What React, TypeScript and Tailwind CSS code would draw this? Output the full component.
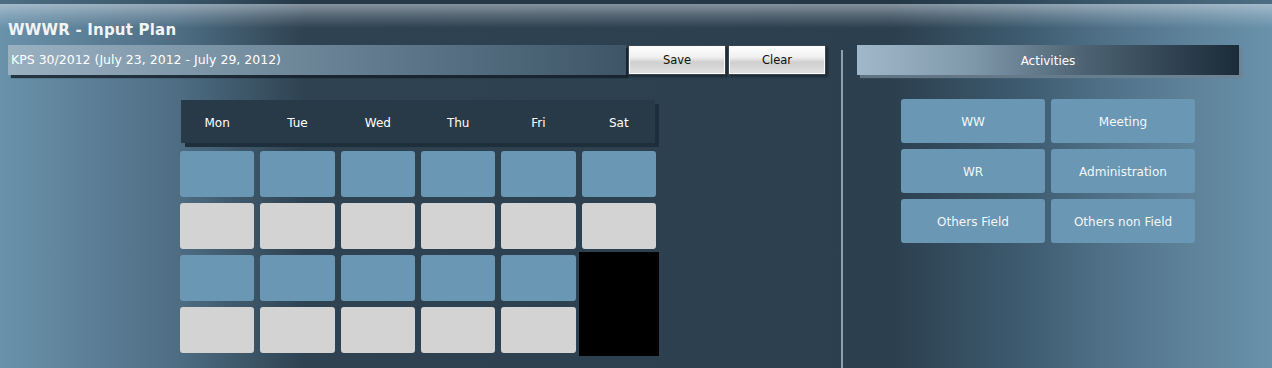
import React from "react";

const days = ["Mon", "Tue", "Wed", "Thu", "Fri", "Sat"];
const activities = ["WW", "Meeting", "WR", "Administration", "Others Field", "Others non Field"];

function Cell({ kind }: { kind: "blue" | "grey" }) {
  return (
    <div
      className={
        kind === "blue"
          ? "h-[46px] rounded-[3px] bg-[#6a97b3]"
          : "h-[46px] rounded-[3px] bg-[#d3d3d3]"
      }
    />
  );
}

function GlossButton({ label }: { label: string }) {
  return (
    <button className="w-[98px] h-[30px] border border-[#3c4650] shadow-[2px_2px_2px_rgba(0,0,0,0.35)] bg-[linear-gradient(to_bottom,#ffffff_0%,#f0f0f0_40%,#cfcfcf_58%,#e2e2e2_100%)] text-[11.5px] text-[#111] flex items-center justify-center">
      <span className="block w-full h-full border border-[#fafafa] flex items-center justify-center pt-[1px]">{label}</span>
    </button>
  );
}

export default function App() {
  return (
    <div className="w-[1272px] h-[368px] overflow-hidden font-['DejaVu_Sans',Verdana,sans-serif] bg-[linear-gradient(to_bottom,rgba(20,40,55,0.35)_0px,rgba(20,40,55,0.35)_4px,rgba(220,228,235,0.5)_4px,rgba(220,228,235,0.22)_16px,rgba(255,255,255,0)_28px),linear-gradient(to_right,#6a92ab_0%,#4e6d83_14%,#2e4251_24%,#2b3f4e_70%,#3d5a6e_80%,#52748b_88%,#6a92ab_100%)]">
      <div className="pt-[21px] pl-[8px] h-[45px]">
        <h1 className="text-[15px] font-bold text-[#f2f4f5] leading-[18px] tracking-[0.2px]">WWWR - Input Plan</h1>
      </div>
      <div className="flex h-[323px]">
        {/* left panel */}
        <div className="ml-[8px] w-[818px] flex flex-col">
          <div className="flex">
            <div className="w-[618px] h-[30px] mr-[2px] flex items-center pl-[3px] text-[12.5px] text-white bg-[linear-gradient(to_right,#9ab1c2_0%,#7d96a8_30%,#5c7588_65%,#3d5567_100%)] shadow-[3px_3px_1px_rgba(20,30,40,0.8)]">
              KPS 30/2012 (July 23, 2012 - July 29, 2012)
            </div>
            <div className="flex gap-[2px]">
              <GlossButton label="Save" />
              <GlossButton label="Clear" />
            </div>
          </div>
          <div className="ml-[172px] mt-[25px] w-[480px]">
            <div className="ml-[1px] w-[474px] h-[43px] bg-[#283a48] shadow-[4px_4px_0px_#1f2e3b] flex items-center pt-[2px]">
              <div className="-ml-[1px] w-[476px] shrink-0 grid grid-cols-6 gap-[6px] text-[12px] text-white">
                {days.map((d) => (
                  <div key={d} className="text-center">
                    {d}
                  </div>
                ))}
              </div>
            </div>
            <div className="mt-[8px] w-[476px] grid grid-cols-6 gap-[6px]">
              {days.map((d) => (
                <Cell key={"a" + d} kind="blue" />
              ))}
              {days.map((d) => (
                <Cell key={"b" + d} kind="grey" />
              ))}
              {days.slice(0, 5).map((d) => (
                <Cell key={"c" + d} kind="blue" />
              ))}
              <div className="row-span-2 -m-[3px] bg-black" />
              {days.slice(0, 5).map((d) => (
                <Cell key={"d" + d} kind="grey" />
              ))}
            </div>
          </div>
        </div>
        {/* divider */}
        <div className="ml-[15px] mt-[5px] w-[2px] bg-[#8ba2b3]" />
        {/* right panel */}
        <div className="ml-[14px] w-[382px] flex flex-col">
          <div className="h-[30px] flex items-center justify-center pt-[1px] text-[12px] text-white bg-[linear-gradient(to_right,#a0b8ca_0%,#7f98aa_30%,#4c6272_60%,#1b2b39_100%)] shadow-[3px_3px_1px_rgba(110,130,145,0.8)]">
            Activities
          </div>
          <div className="ml-[44px] mt-[24px] w-[294px] grid grid-cols-2 gap-[6px]">
            {activities.map((a) => (
              <div
                key={a}
                className="h-[44px] rounded-[3px] bg-[#6a97b3] flex items-center justify-center pt-[2px] text-[12px] text-[#f4f6f8]"
              >
                {a}
              </div>
            ))}
          </div>
        </div>
      </div>
    </div>
  );
}
